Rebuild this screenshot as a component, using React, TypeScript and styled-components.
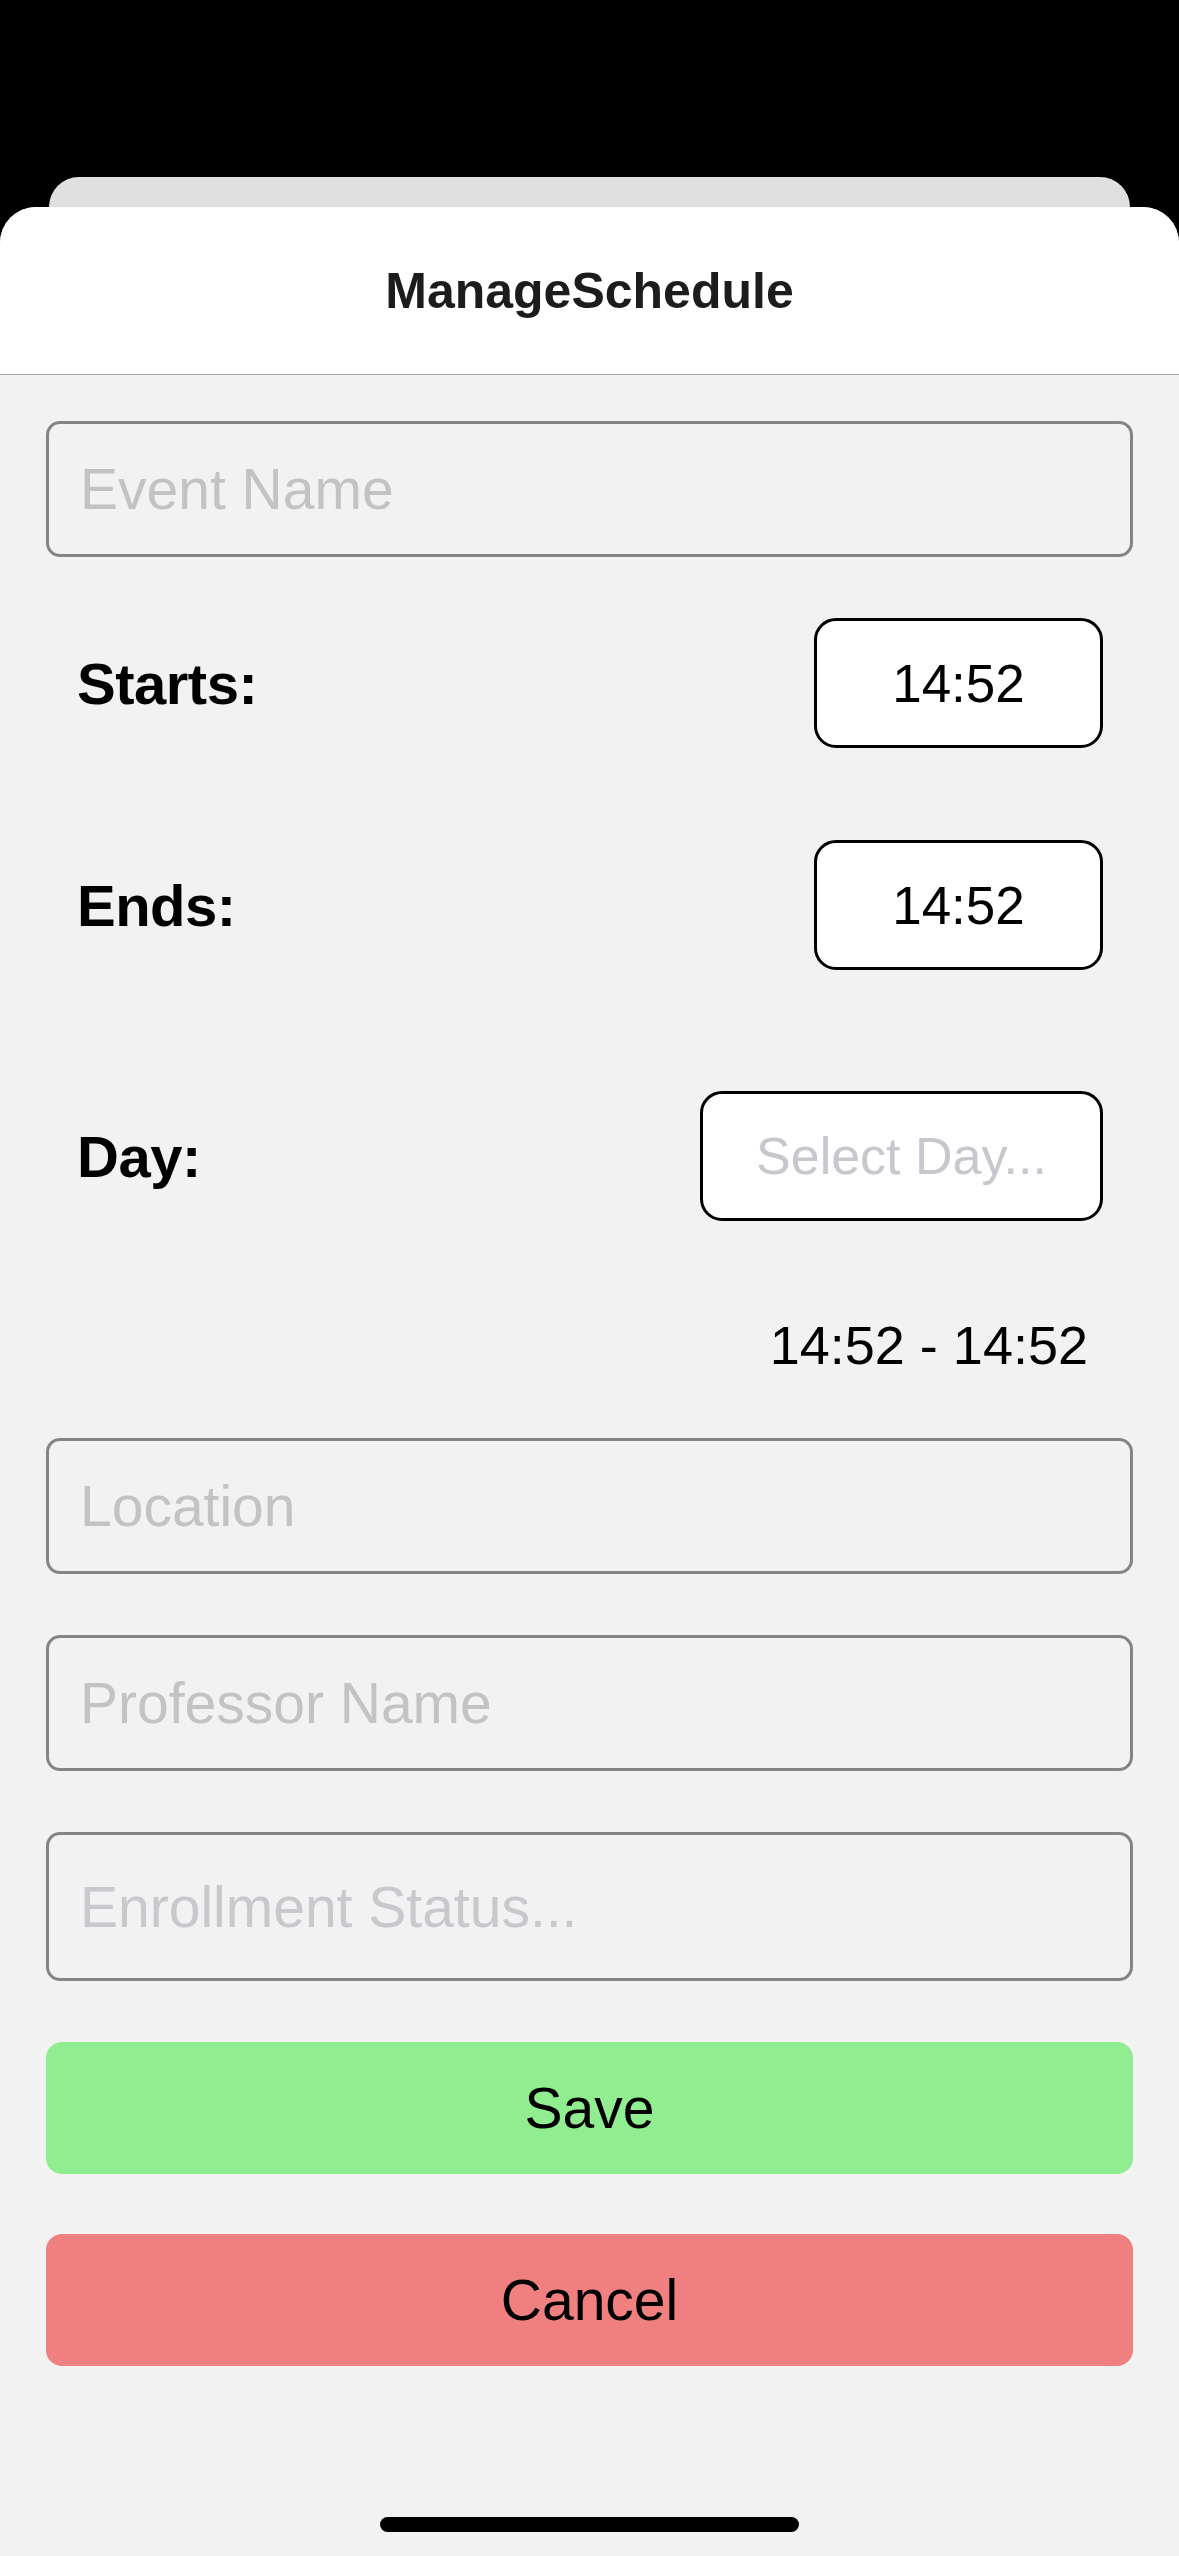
import React from "react";
import styled, { createGlobalStyle } from "styled-components";

const GlobalStyle = createGlobalStyle`
  html, body {
    margin: 0;
    padding: 0;
    background: #000;
  }
  * { box-sizing: border-box; }
  body {
    font-family: "Liberation Sans", Arial, sans-serif;
  }
`;

const Screen = styled.div`
  width: 1179px;
  height: 2556px;
  background: #000;
  display: flex;
  flex-direction: column;
  padding-top: 177px;
  overflow: hidden;
`;

const BehindCard = styled.div`
  height: 30px;
  margin: 0 49px;
  background: #e0e0e0;
  border-radius: 30px 30px 0 0;
  flex-shrink: 0;
`;

const Sheet = styled.div`
  flex: 1;
  background: #f2f2f2;
  border-radius: 36px 36px 0 0;
  overflow: hidden;
  display: flex;
  flex-direction: column;
`;

const Header = styled.header`
  height: 168px;
  background: #fff;
  border-bottom: 1px solid #a8a8a8;
  display: flex;
  align-items: center;
  justify-content: center;
  flex-shrink: 0;
`;

const Title = styled.h1`
  margin: 0;
  font-size: 50px;
  font-weight: 700;
  color: #1c1c1e;
  letter-spacing: 0;
`;

const Content = styled.main`
  flex: 1;
  display: flex;
  flex-direction: column;
  padding: 0 46px 24px 46px;
`;

const TextField = styled.input<{ $top: number; $tall?: boolean }>`
  margin-top: ${(p) => p.$top}px;
  width: 100%;
  height: ${(p) => (p.$tall ? 149 : 136)}px;
  border: 3px solid #858585;
  border-radius: 14px;
  background: transparent;
  padding: 0 0 0 31px;
  font-family: "Liberation Sans", Arial, sans-serif;
  font-size: 57px;
  color: #000;
  outline: none;
  flex-shrink: 0;
  &::placeholder {
    color: ${(p) => (p.$tall ? "#c8c8cd" : "#c3c3c5")};
  }
`;

const Row = styled.div<{ $top: number }>`
  margin-top: ${(p) => p.$top}px;
  display: flex;
  align-items: center;
  justify-content: space-between;
  padding: 0 30px 0 31px;
  flex-shrink: 0;
`;

const Label = styled.span`
  font-size: 58px;
  font-weight: 700;
  color: #000;
  letter-spacing: -0.5px;
`;

const PickerBox = styled.div<{ $width: number; $placeholder?: boolean }>`
  width: ${(p) => p.$width}px;
  height: 130px;
  border: 3px solid #000;
  border-radius: 22px;
  background: #fff;
  display: flex;
  align-items: center;
  justify-content: center;
  font-size: ${(p) => (p.$placeholder ? 52 : 53)}px;
  color: ${(p) => (p.$placeholder ? "#c7c7cd" : "#000")};
`;

const Summary = styled.div<{ $top: number }>`
  margin-top: ${(p) => p.$top}px;
  height: 64px;
  line-height: 64px;
  text-align: right;
  padding-right: 45px;
  font-size: 54px;
  color: #000;
  flex-shrink: 0;
`;

const ActionButton = styled.button<{ $top: number; $tone: "save" | "cancel" }>`
  margin-top: ${(p) => p.$top}px;
  width: 100%;
  height: 132px;
  border: none;
  border-radius: 16px;
  background: ${(p) => (p.$tone === "save" ? "#90ee90" : "#f08080")};
  font-family: "Liberation Sans", Arial, sans-serif;
  font-size: 57px;
  color: #000;
  display: flex;
  align-items: center;
  justify-content: center;
  flex-shrink: 0;
`;

const HomeIndicator = styled.div`
  margin: auto auto 0 auto;
  width: 419px;
  height: 15px;
  border-radius: 8px;
  background: #000;
  flex-shrink: 0;
`;

export default function App() {
  return (
    <>
      <GlobalStyle />
      <Screen>
        <BehindCard />
        <Sheet>
          <Header>
            <Title>ManageSchedule</Title>
          </Header>
          <Content>
            <TextField $top={46} placeholder="Event Name" />
            <Row $top={61}>
              <Label>Starts:</Label>
              <PickerBox $width={289}>14:52</PickerBox>
            </Row>
            <Row $top={92}>
              <Label>Ends:</Label>
              <PickerBox $width={289}>14:52</PickerBox>
            </Row>
            <Row $top={121}>
              <Label>Day:</Label>
              <PickerBox $width={403} $placeholder>
                Select Day...
              </PickerBox>
            </Row>
            <Summary $top={92}>14:52 - 14:52</Summary>
            <TextField $top={61} placeholder="Location" />
            <TextField $top={61} placeholder="Professor Name" />
            <TextField $top={61} $tall placeholder="Enrollment Status..." />
            <ActionButton $top={61} $tone="save">
              Save
            </ActionButton>
            <ActionButton $top={60} $tone="cancel">
              Cancel
            </ActionButton>
            <HomeIndicator />
          </Content>
        </Sheet>
      </Screen>
    </>
  );
}
